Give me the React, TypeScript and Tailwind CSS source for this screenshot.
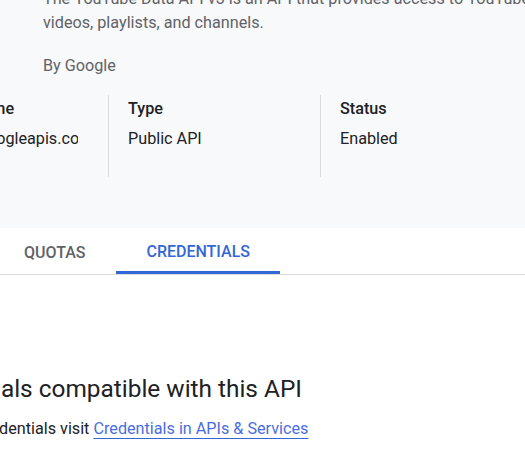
import React from 'react';

const stats = [
  { label: 'Service name', value: 'youtube.googleapis.com' },
  { label: 'Type', value: 'Public API' },
  { label: 'Status', value: 'Enabled' },
];

const tabs = ['QUOTAS', 'CREDENTIALS'];

const App: React.FC = () => {
  return (
    <div className="w-[525px] h-[458px] overflow-hidden bg-white font-['Roboto',sans-serif]">
      {/* header */}
      <div className="bg-[#f8f9fa] h-[228px] overflow-hidden">
        <div className="pl-[43px] -mt-[13px] w-[660px]">
          <p className="text-[16.2px] leading-[24px] text-[#5f6368]">
            The YouTube Data API v3 is an API that provides access to YouTube data, such as
            <br />
            videos, playlists, and channels.
          </p>
          <p className="mt-[19px] text-[16.2px] leading-[24px] text-[#5f6368]">By Google</p>
        </div>
        <div className="flex -ml-[104px] mt-[17px]">
          {stats.map((s) => (
            <div key={s.label} className="w-[212px] h-[82px] shrink-0 border-l border-[#dadce0] pl-[19px] pt-[2px]">
              <div className="text-[16.2px] leading-[24px] font-medium text-[#202124] whitespace-nowrap">{s.label}</div>
              <div className="mt-[6px] w-[162px] overflow-hidden whitespace-nowrap text-[16.2px] leading-[24px] text-[#202124]">
                {s.value}
              </div>
            </div>
          ))}
        </div>
      </div>

      {/* tabs */}
      <div className="flex border-b border-[#dadce0] -ml-[7px]">
        {tabs.map((t) => (
          <div
            key={t}
            className={
              t === 'CREDENTIALS'
                ? 'h-[46px] px-[30px] flex items-center text-[16px] font-medium text-[#3367d6] border-b-[3px] border-[#3367d6] -mb-px pt-[5px]'
                : 'h-[46px] px-[31px] flex items-center text-[16px] font-medium text-[#5f6368] pt-[3px]'
            }
          >
            {t}
          </div>
        ))}
      </div>

      {/* credentials body */}
      <div className="-ml-[90px] mt-[98px] whitespace-nowrap">
        <h2 className="text-[24.4px] leading-[32px] font-normal text-[#202124]">Credentials compatible with this API</h2>
        <p className="ml-[8px] mt-[12px] text-[16.2px] leading-[24px] text-[#202124]">
          To view credentials visit{' '}
          <a href="#" className="text-[#4a6ee0] underline decoration-[#3367d6] underline-offset-[4px]">
            Credentials in APIs &amp; Services
          </a>
        </p>
      </div>
    </div>
  );
};

export default App;
